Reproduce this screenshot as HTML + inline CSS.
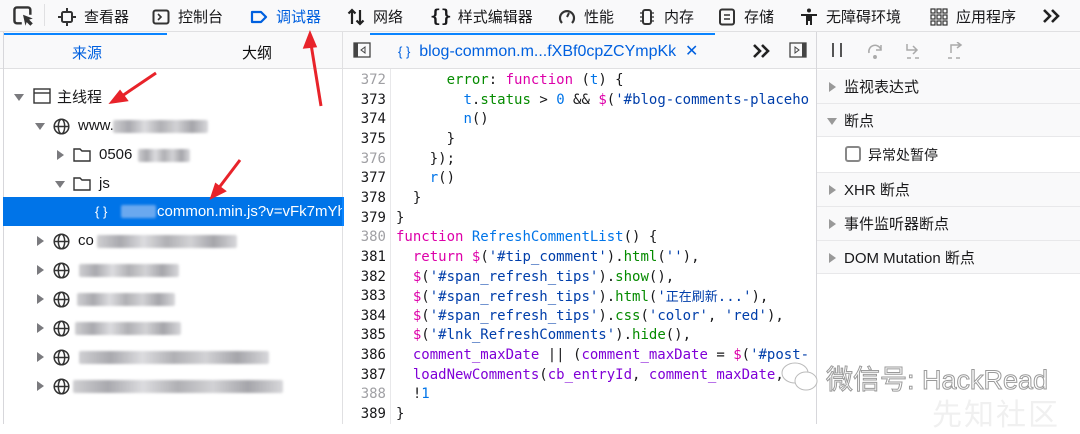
<!DOCTYPE html>
<html><head><meta charset="utf-8"><style>
*{margin:0;padding:0;box-sizing:border-box}
body{width:1080px;height:424px;overflow:hidden;background:#fff;font-family:"Liberation Sans","Noto Sans CJK SC",sans-serif;color:#0c0c0d;position:relative}
.abs{position:absolute}
.tb{left:0;top:0;width:1080px;height:32px;background:#f9f9fa;border-bottom:1px solid #e0e0e2}
.ti{position:absolute;top:6px;font-size:15px;color:#18181a;white-space:nowrap;display:flex;align-items:center;gap:8px}
.ti svg{width:18px;height:18px}
.row2{left:0;top:32px;width:1080px;height:37px;background:#f9f9fa;border-bottom:1px solid #e0e0e2}
.vl{position:absolute;width:1px;background:#e0e0e2}
.tree div.r{position:absolute;left:3px;width:339px;height:29px;font-size:15px;display:flex;align-items:center;color:#18181a}
.tri{width:0;height:0;border-left:5px solid transparent;border-right:5px solid transparent;border-top:7px solid #7a7a7e;position:absolute}
.trr{width:0;height:0;border-top:5px solid transparent;border-bottom:5px solid transparent;border-left:7px solid #7a7a7e;position:absolute}
.blur{position:absolute;height:13px;background:linear-gradient(90deg,#cfcfd2,#a9a9ae,#dcdcdf,#b0b0b4,#d2d2d5,#a5a5aa,#d8d8db);border-radius:2px;filter:blur(1.2px)}
.glb{position:absolute;left:50px;top:7px}
.code{left:342px;top:71px;width:475px}
.ln{position:absolute;left:0;width:44px;text-align:right;font-family:"DejaVu Sans Mono",monospace;font-size:14px;color:#18181a;line-height:18px}
.ln.g{color:#a0a0a4}
.cl{position:absolute;left:54px;font-family:"DejaVu Sans Mono",monospace;font-size:14px;white-space:pre;color:#18181a;line-height:18px;height:18px}
.k{color:#dd00a9}.p{color:#058b00}.b{color:#0074e8}.s{color:#003eaa}.v{color:#8000d7}
.rp div.r{position:absolute;left:817px;width:263px;font-size:15px;color:#18181a;display:flex;align-items:center;border-bottom:1px solid #e8e8ea;background:#f9f9fa}
</style></head><body>
<div class="abs tb"></div>
<div class="ti" style="left:12px;top:5px"><svg viewBox="0 0 18 18" style="width:22px;height:22px"><path d="M8 15H4a2 2 0 0 1-2-2V4a2 2 0 0 1 2-2h9a2 2 0 0 1 2 2v4" fill="none" stroke="#333" stroke-width="2"/><path d="M9 8l8 3-3 1 3 3-2 2-3-3-1 3z" fill="#333"/></svg></div>
<div class="vl" style="left:44px;top:4px;height:22px"></div>
<div class="ti" style="left:58px"><svg viewBox="0 0 18 18"><rect x="4" y="4" width="10" height="10" rx="1.5" fill="none" stroke="#333" stroke-width="2"/><path d="M9 0v4M9 14v4M0 9h4M14 9h4" stroke="#333" stroke-width="2"/></svg>查看器</div>
<div class="ti" style="left:152px"><svg viewBox="0 0 18 18"><rect x="1.5" y="2.5" width="15" height="13" rx="2" fill="none" stroke="#333" stroke-width="2"/><path d="M6 6l3 3-3 3" fill="none" stroke="#333" stroke-width="1.6"/></svg>控制台</div>
<div class="ti" style="left:250px;color:#0060df"><svg viewBox="0 0 18 18"><path d="M2 4h9l5 5-5 5H2z" fill="none" stroke="#0060df" stroke-width="2.2" stroke-linejoin="round"/></svg>调试器</div>
<div class="ti" style="left:347px"><svg viewBox="0 0 18 18"><path d="M5 16V2M1.5 5.5L5 2l3.5 3.5M13 2v14M9.5 12.5L13 16l3.5-3.5" fill="none" stroke="#222" stroke-width="2.2"/></svg>网络</div>
<div class="ti" style="left:430px;gap:6px"><span style="font-family:'DejaVu Sans Mono';font-weight:bold;font-size:18px">{}</span>样式编辑器</div>
<div class="ti" style="left:558px"><svg viewBox="0 0 18 18"><path d="M4 15A7 7 0 1 1 14 15" fill="none" stroke="#333" stroke-width="2.2"/><path d="M9 9l2-4" stroke="#333" stroke-width="2"/></svg>性能</div>
<div class="ti" style="left:638px"><svg viewBox="0 0 18 18"><rect x="5" y="2" width="8" height="14" rx="2" fill="none" stroke="#333" stroke-width="2"/><path d="M2 5h3M2 9h3M2 13h3M13 5h3M13 9h3M13 13h3" stroke="#333" stroke-width="1.3"/></svg>内存</div>
<div class="ti" style="left:718px"><svg viewBox="0 0 18 18"><rect x="2" y="1.5" width="14" height="15" rx="2" fill="none" stroke="#333" stroke-width="2"/><path d="M6 7h6M6 11h6" stroke="#333" stroke-width="1.6"/></svg>存储</div>
<div class="ti" style="left:800px"><svg viewBox="0 0 18 18"><circle cx="9" cy="2.5" r="2" fill="#222"/><path d="M1 6h16v2h-5v9h-2v-4H8v4H6V8H1z" fill="#222"/></svg>无障碍环境</div>
<div class="ti" style="left:930px"><svg viewBox="0 0 18 18" fill="none" stroke="#333" stroke-width="1.2"><rect x="1" y="1" width="4" height="4"/><rect x="7" y="1" width="4" height="4"/><rect x="13" y="1" width="4" height="4"/><rect x="1" y="7" width="4" height="4"/><rect x="7" y="7" width="4" height="4"/><rect x="13" y="7" width="4" height="4"/><rect x="1" y="13" width="4" height="4"/><rect x="7" y="13" width="4" height="4"/><rect x="13" y="13" width="4" height="4"/></svg>应用程序</div>
<svg class="abs" style="left:1042px;top:8px" width="20" height="16" viewBox="0 0 20 16"><path d="M2 2l6 6-6 6M10 2l6 6-6 6" fill="none" stroke="#222" stroke-width="2.6"/></svg>

<div class="abs row2"></div>
<div class="abs" style="left:4px;top:33px;width:163px;height:2px;background:#0a84ff"></div>
<div class="abs" style="left:370px;top:33px;width:345px;height:2px;background:#0a84ff"></div>
<div class="abs" style="left:72px;top:42px;font-size:15px;color:#0060df">来源</div>
<div class="abs" style="left:242px;top:42px;font-size:15px">大纲</div>
<div class="vl" style="left:342px;top:32px;height:392px"></div>
<div class="vl" style="left:3px;top:32px;height:392px;background:#d7d7db"></div>
<div class="vl" style="left:816px;top:32px;height:392px;background:#d7d7db"></div>
<svg class="abs" style="left:353px;top:42px" width="18" height="16" viewBox="0 0 18 16"><rect x="1" y="1" width="16" height="14" fill="none" stroke="#444" stroke-width="1.3"/><rect x="1" y="1" width="4" height="14" fill="#444"/><path d="M12 5l-4 3 4 3z" fill="none" stroke="#444"/></svg>
<div class="abs" style="left:398px;top:41px;font-size:16px;color:#0060df;white-space:nowrap"><span style="font-size:13px;color:#0060df">{ }</span>&nbsp; blog-common.m...fXBf0cpZCYmpKk&nbsp; <span style="color:#0060df">✕</span></div>
<svg class="abs" style="left:752px;top:43px" width="20" height="16" viewBox="0 0 20 16"><path d="M2 2l6 6-6 6M10 2l6 6-6 6" fill="none" stroke="#222" stroke-width="2.6"/></svg>
<svg class="abs" style="left:789px;top:42px" width="18" height="16" viewBox="0 0 18 16"><rect x="1" y="1" width="16" height="14" fill="none" stroke="#444" stroke-width="1.3"/><rect x="13" y="1" width="4" height="14" fill="#444"/><path d="M6 5l4 3-4 3z" fill="none" stroke="#444"/></svg>
<div class="abs" style="left:832px;top:43px;width:2px;height:14px;background:#555"></div>
<div class="abs" style="left:840px;top:43px;width:2px;height:14px;background:#555"></div>
<svg class="abs" style="left:866px;top:42px" width="20" height="18" viewBox="0 0 20 18" fill="none" stroke="#aaa" stroke-width="1.5"><path d="M3 11a6 6 0 0 1 12-3"/><path d="M15 3v5h-5"/><circle cx="9" cy="15" r="1.2" fill="#aaa"/></svg>
<svg class="abs" style="left:904px;top:42px" width="20" height="18" viewBox="0 0 20 18" fill="none" stroke="#aaa" stroke-width="1.5"><path d="M3 2v6h10M9 4l4 4-4 4M3 16h4M11 16h4"/></svg>
<svg class="abs" style="left:945px;top:42px" width="20" height="18" viewBox="0 0 20 18" fill="none" stroke="#aaa" stroke-width="1.5"><path d="M6 11V3h10M12 0l4 3-4 3M3 16h4M11 16h4"/></svg>

<div class="tree">
<div class="r" style="top:82px"><span class="tri" style="left:11px;top:12px"></span><svg class="abs" style="left:30px;top:6px" width="18" height="16"><rect x="1" y="1" width="16" height="14" fill="none" stroke="#333" stroke-width="1.4"/><path d="M1 5h16" stroke="#333" stroke-width="1.4"/></svg><span style="position:absolute;left:54px">主线程</span></div>
<div class="r" style="top:111px"><span class="tri" style="left:32px;top:12px"></span><svg class="glb" width="17" height="17" viewBox="0 0 17 17" fill="none" stroke="#333" stroke-width="1.5"><circle cx="8.5" cy="8.5" r="7.3"/><ellipse cx="8.5" cy="8.5" rx="3.2" ry="7.3"/><path d="M1.2 8.5h14.6"/></svg><span style="position:absolute;left:75px">www.</span><div class="blur" style="left:110px;top:9px;width:95px"></div></div>
<div class="r" style="top:140px"><span class="trr" style="left:54px;top:10px"></span><svg class="abs" style="left:70px;top:6px" width="18" height="16"><path d="M1 3h6l2 2h8v10H1z" fill="none" stroke="#333" stroke-width="1.4"/></svg><span style="position:absolute;left:96px">0506</span><div class="blur" style="left:135px;top:9px;width:52px"></div></div>
<div class="r" style="top:169px"><span class="tri" style="left:52px;top:12px"></span><svg class="abs" style="left:70px;top:6px" width="18" height="16"><path d="M1 3h6l2 2h8v10H1z" fill="none" stroke="#333" stroke-width="1.4"/></svg><span style="position:absolute;left:96px">js</span></div>
<div class="r" style="top:197px;background:#0074e8;color:#fff;height:29px"><span style="position:absolute;left:92px;font-size:13px">{ }</span><div class="blur" style="left:118px;top:8px;width:35px;background:#6aa8ef"></div><span style="position:absolute;left:154px;white-space:nowrap">common.min.js?v=vFk7mYh</span></div>
<div class="r" style="top:226px"><span class="trr" style="left:34px;top:10px"></span><svg class="glb" width="17" height="17" viewBox="0 0 17 17" fill="none" stroke="#333" stroke-width="1.5"><circle cx="8.5" cy="8.5" r="7.3"/><ellipse cx="8.5" cy="8.5" rx="3.2" ry="7.3"/><path d="M1.2 8.5h14.6"/></svg><span style="position:absolute;left:75px">co</span><div class="blur" style="left:94px;top:9px;width:140px"></div></div>
<div class="r" style="top:255px"><span class="trr" style="left:34px;top:10px"></span><svg class="glb" width="17" height="17" viewBox="0 0 17 17" fill="none" stroke="#333" stroke-width="1.5"><circle cx="8.5" cy="8.5" r="7.3"/><ellipse cx="8.5" cy="8.5" rx="3.2" ry="7.3"/><path d="M1.2 8.5h14.6"/></svg><div class="blur" style="left:76px;top:9px;width:100px"></div></div>
<div class="r" style="top:284px"><span class="trr" style="left:34px;top:10px"></span><svg class="glb" width="17" height="17" viewBox="0 0 17 17" fill="none" stroke="#333" stroke-width="1.5"><circle cx="8.5" cy="8.5" r="7.3"/><ellipse cx="8.5" cy="8.5" rx="3.2" ry="7.3"/><path d="M1.2 8.5h14.6"/></svg><div class="blur" style="left:74px;top:9px;width:98px"></div></div>
<div class="r" style="top:313px"><span class="trr" style="left:34px;top:10px"></span><svg class="glb" width="17" height="17" viewBox="0 0 17 17" fill="none" stroke="#333" stroke-width="1.5"><circle cx="8.5" cy="8.5" r="7.3"/><ellipse cx="8.5" cy="8.5" rx="3.2" ry="7.3"/><path d="M1.2 8.5h14.6"/></svg><div class="blur" style="left:72px;top:9px;width:106px"></div></div>
<div class="r" style="top:342px"><span class="trr" style="left:34px;top:10px"></span><svg class="glb" width="17" height="17" viewBox="0 0 17 17" fill="none" stroke="#333" stroke-width="1.5"><circle cx="8.5" cy="8.5" r="7.3"/><ellipse cx="8.5" cy="8.5" rx="3.2" ry="7.3"/><path d="M1.2 8.5h14.6"/></svg><div class="blur" style="left:76px;top:9px;width:190px"></div></div>
<div class="r" style="top:371px"><span class="trr" style="left:34px;top:10px"></span><svg class="glb" width="17" height="17" viewBox="0 0 17 17" fill="none" stroke="#333" stroke-width="1.5"><circle cx="8.5" cy="8.5" r="7.3"/><ellipse cx="8.5" cy="8.5" rx="3.2" ry="7.3"/><path d="M1.2 8.5h14.6"/></svg><div class="blur" style="left:70px;top:9px;width:210px"></div></div>
</div>

<div class="abs" style="left:342px;top:69px;width:475px;height:355px">
<div class="vl" style="left:48px;top:0;height:355px;background:#e8e8ea"></div>
<div class="abs" style="left:0;top:128px;width:2px;height:29px;background:#0a84ff"></div>
</div>
<div id="code" class="abs code"></div>
<script>
var L=[
[372,1,'      <span class="p">error</span>: <span class="k">function</span> (<span class="b">t</span>) {'],
[373,0,'        <span class="b">t</span>.<span class="p">status</span> &gt; <span class="b">0</span> &amp;&amp; <span class="k">$</span>(<span class="s">\'#blog-comments-placeho</span>'],
[374,0,'        <span class="b">n</span>()'],
[375,0,'      }'],
[376,1,'    });'],
[377,0,'    <span class="b">r</span>()'],
[378,0,'  }'],
[379,0,'}'],
[380,1,'<span class="k">function</span> <span class="b">RefreshCommentList</span>() {'],
[381,0,'  <span class="k">return</span> <span class="k">$</span>(<span class="s">\'#tip_comment\'</span>).<span class="p">html</span>(<span class="s">\'\'</span>),'],
[382,0,'  <span class="k">$</span>(<span class="s">\'#span_refresh_tips\'</span>).<span class="p">show</span>(),'],
[383,0,'  <span class="k">$</span>(<span class="s">\'#span_refresh_tips\'</span>).<span class="p">html</span>(<span class="s">\'<span style="font-family:\'Noto Sans CJK SC\';font-size:13px;line-height:18px">正在刷新</span>...\'</span>),'],
[384,0,'  <span class="k">$</span>(<span class="s">\'#span_refresh_tips\'</span>).<span class="p">css</span>(<span class="s">\'color\'</span>, <span class="s">\'red\'</span>),'],
[385,0,'  <span class="k">$</span>(<span class="s">\'#lnk_RefreshComments\'</span>).<span class="p">hide</span>(),'],
[386,0,'  <span class="v">comment_maxDate</span> || (<span class="v">comment_maxDate</span> = <span class="k">$</span>(<span class="s">\'#post-</span>'],
[387,0,'  <span class="v">loadNewComments</span>(<span class="v">cb_entryId</span>, <span class="v">comment_maxDate</span>, <span style="color:#ccc">co</span>'],
[388,1,'  !<span class="b">1</span>'],
[389,0,'}']];
var h='';L.forEach(function(l,i){var t=i*19.65;h+='<div class="ln'+(l[1]?' g':'')+'" style="top:'+t+'px">'+l[0]+'</div><div class="cl" style="top:'+t+'px;overflow:hidden">'+l[2]+'</div>';});
document.getElementById('code').innerHTML=h;
</script>

<div class="rp">
<div class="r" style="top:70px;height:34px"><span class="trr" style="left:12px;top:12px;border-left-color:#999"></span><span style="position:absolute;left:27px">监视表达式</span></div>
<div class="r" style="top:104px;height:33px"><span class="tri" style="left:10px;top:14px;border-top-color:#999"></span><span style="position:absolute;left:27px">断点</span></div>
<div class="r" style="top:137px;height:36px;background:#fff"><span style="position:absolute;left:28px;top:9px;width:16px;height:16px;border:2px solid #888;border-radius:3px"></span><span style="position:absolute;left:51px;font-size:14px">异常处暂停</span></div>
<div class="r" style="top:173px;height:34px"><span class="trr" style="left:12px;top:12px;border-left-color:#999"></span><span style="position:absolute;left:27px">XHR 断点</span></div>
<div class="r" style="top:207px;height:34px"><span class="trr" style="left:12px;top:12px;border-left-color:#999"></span><span style="position:absolute;left:27px">事件监听器断点</span></div>
<div class="r" style="top:241px;height:33px"><span class="trr" style="left:12px;top:12px;border-left-color:#999"></span><span style="position:absolute;left:27px">DOM Mutation 断点</span></div>
</div>

<div class="abs" style="left:932px;top:390px;font-size:30px;color:#f0f0f0;letter-spacing:2px">先知社区</div>
<div class="abs" style="left:826px;top:358px;font-size:27px;color:#fff;-webkit-text-stroke:1px #9a9a9a;white-space:nowrap">微信号: HackRead</div>
<svg class="abs" style="left:780px;top:360px" width="40" height="34" viewBox="0 0 40 34"><ellipse cx="15" cy="13" rx="13" ry="10" fill="#fff" stroke="#bbb"/><ellipse cx="26" cy="21" rx="11" ry="9" fill="#fff" stroke="#bbb"/></svg>

<svg class="abs" style="left:0;top:0" width="1080" height="424">
<g stroke="#e8232a" stroke-width="3" fill="#e8232a">
<line x1="156" y1="73" x2="122" y2="96"/><path d="M112 102l14-2-6-8z"/>
<line x1="321" y1="106" x2="311" y2="44"/><path d="M310 34l-5 13 10-1z"/>
<line x1="240" y1="160" x2="218" y2="189"/><path d="M212 197l12-6-8-6z"/>
</g></svg>
</body></html>
